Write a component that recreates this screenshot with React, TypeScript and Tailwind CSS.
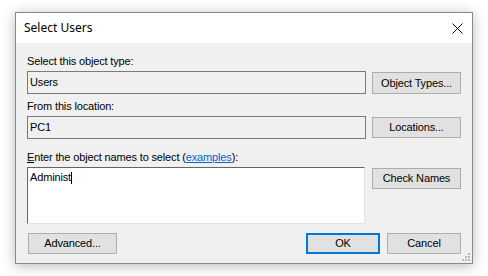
import React from "react";

const body = { fontFamily: '"Liberation Sans", Arial, sans-serif' };

function Btn({ children, w, primary }: { children: React.ReactNode; w: string; primary?: boolean }) {
  return (
    <div
      className={`${w} h-[21px] flex items-center justify-center text-[11px] text-black bg-[#e1e1e1] ${
        primary ? "border-2 border-[#0078d7]" : "border border-[#adadad]"
      }`}
    >
      {children}
    </div>
  );
}

export default function App() {
  return (
    <div className="w-[488px] h-[276px] bg-white pl-[15px] pt-[12px] tracking-[-0.15px]" style={body}>
      <div className="relative w-[458px] h-[252px] border border-[#8a8a8a] shadow-[0_2px_12px_rgba(0,0,0,0.28)] flex flex-col bg-[#f0f0f0]">
        <div className="h-[30px] bg-white flex items-center justify-between pl-[8px] pr-[9px]">
          <span className="text-[12px] text-black leading-none tracking-normal" style={{ fontFamily: '"Noto Sans", "Open Sans", sans-serif' }}>
            Select Users
          </span>
          <svg width="11" height="11" viewBox="0 0 11 11" className="mt-[1px]">
            <path d="M0.5 0.5 L10.5 10.5 M10.5 0.5 L0.5 10.5" stroke="#000" strokeWidth="1" fill="none" />
          </svg>
        </div>
        <div className="flex-1 flex flex-col pl-[11px] pr-[11px]">
          <div className="h-[13px] leading-[13px] text-[11px] text-black mt-[12px]">Select this object type:</div>
          <div className="flex gap-[6px] mt-[3px]">
            <div className="w-[339px] h-[23px] border border-[#7a7a7a] bg-[#f0f0f0] pl-[2px] flex items-center text-[11px] text-black">
              Users
            </div>
            <div className="mt-[1px]">
              <div className="w-[89px] h-[22px] flex items-center justify-center text-[11px] text-black bg-[#e1e1e1] border border-[#adadad]">
                Object Types...
              </div>
            </div>
          </div>
          <div className="h-[13px] leading-[13px] text-[11px] text-black mt-[6px]">From this location:</div>
          <div className="flex gap-[6px] mt-[3px]">
            <div className="w-[339px] h-[23px] border border-[#7a7a7a] bg-[#f0f0f0] pl-[2px] flex items-center text-[11px] text-black">
              PC1
            </div>
            <div className="mt-[1px]">
              <Btn w="w-[89px]">Locations...</Btn>
            </div>
          </div>
          <div className="h-[13px] leading-[13px] text-[11px] text-black mt-[12px]">
            <span className="underline">E</span>nter the object names to select (
            <span className="text-[#0066cc] underline">examples</span>):
          </div>
          <div className="flex gap-[7px] mt-[3px]">
            <div className="w-[338px] h-[57px] border border-t-[#646464] border-l-[#646464] border-r-[#e3e3e3] border-b-[#e3e3e3] bg-white pl-[2px] pt-[3px] text-[11px] text-black leading-[13px] flex items-start">
              <span>Administ</span>
              <span className="inline-block w-[1px] h-[12px] bg-black mt-[1px]" />
            </div>
            <div className="mt-[1px]">
              <Btn w="w-[89px]">Check Names</Btn>
            </div>
          </div>
          <div className="flex items-start mt-[9px] pl-[1px]">
            <Btn w="w-[89px]">Advanced...</Btn>
            <div className="flex-1" />
            <Btn w="w-[74px]" primary>
              OK
            </Btn>
            <div className="w-[7px]" />
            <Btn w="w-[74px]">Cancel</Btn>
          </div>
        </div>
        <svg width="9" height="9" viewBox="0 0 9 9" className="absolute right-[1px] bottom-[1px]">
          <rect x="6" y="0" width="2" height="2" fill="#b8b8b8" />
          <rect x="3" y="3" width="2" height="2" fill="#b8b8b8" />
          <rect x="6" y="3" width="2" height="2" fill="#b8b8b8" />
          <rect x="0" y="6" width="2" height="2" fill="#b8b8b8" />
          <rect x="3" y="6" width="2" height="2" fill="#b8b8b8" />
          <rect x="6" y="6" width="2" height="2" fill="#b8b8b8" />
        </svg>
      </div>
    </div>
  );
}
